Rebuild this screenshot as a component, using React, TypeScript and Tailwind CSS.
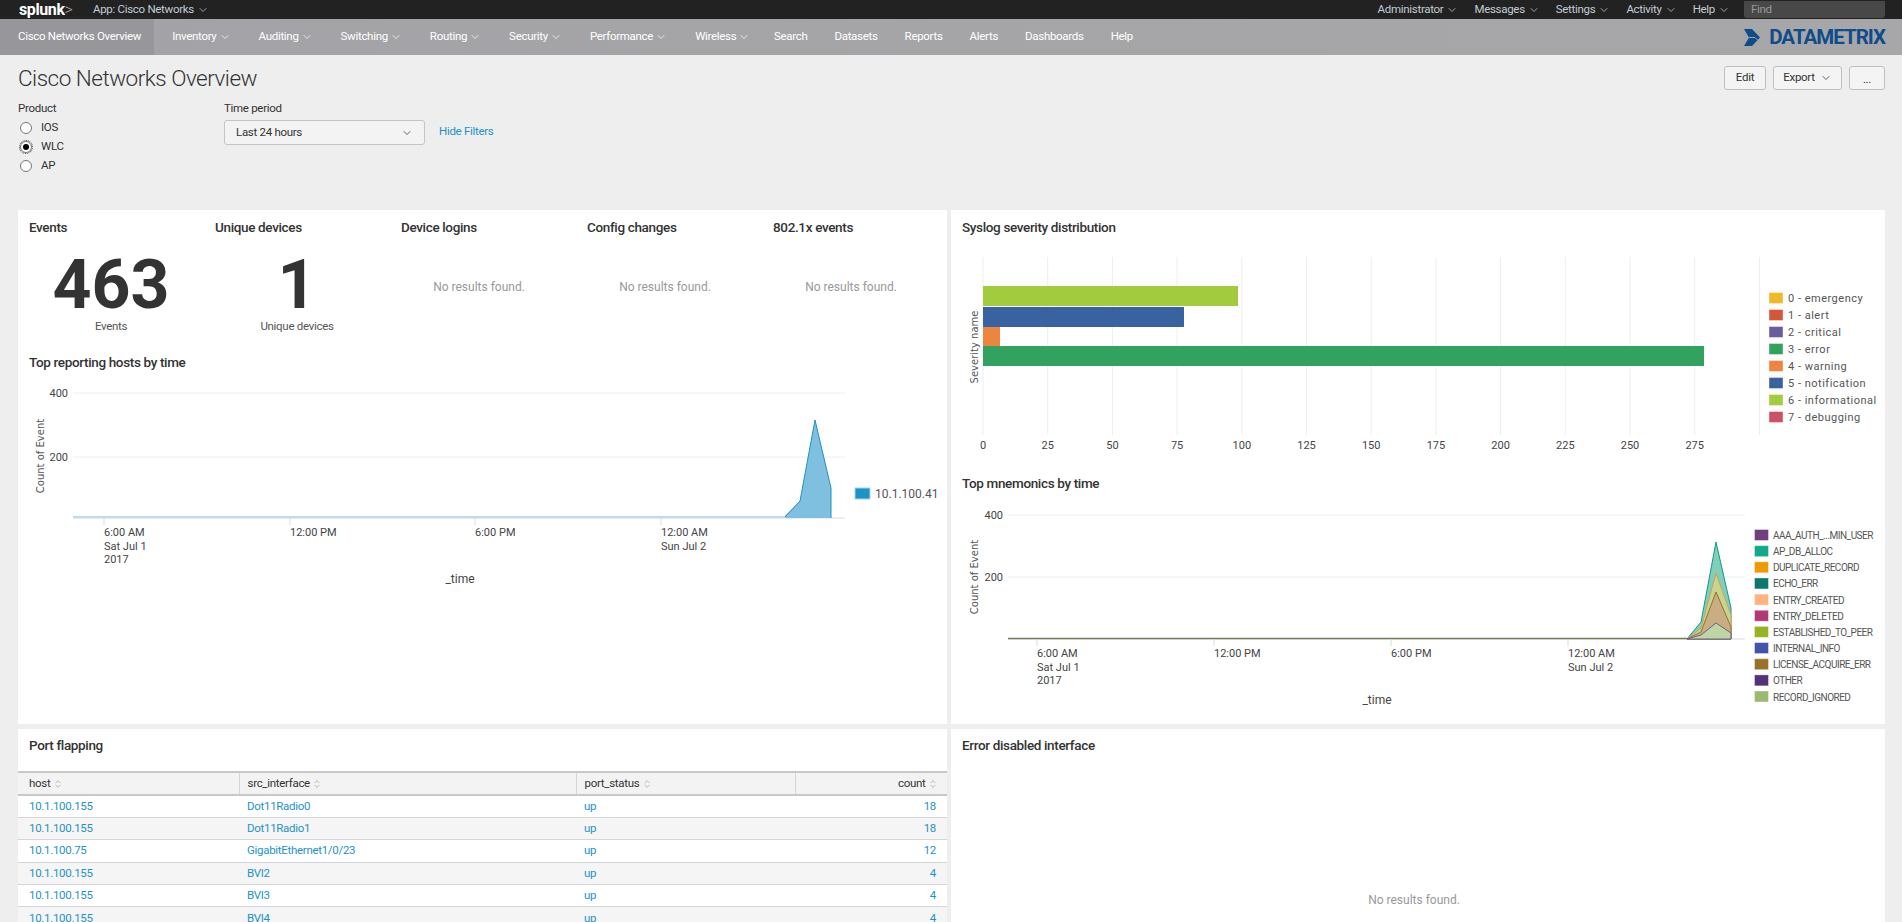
import React from 'react';
import { ChevronDown, ChevronsUpDown } from 'lucide-react';

const navItems = [
  { label: 'Inventory', menu: true },
  { label: 'Auditing', menu: true },
  { label: 'Switching', menu: true },
  { label: 'Routing', menu: true },
  { label: 'Security', menu: true },
  { label: 'Performance', menu: true },
  { label: 'Wireless', menu: true },
  { label: 'Search' },
  { label: 'Datasets' },
  { label: 'Reports' },
  { label: 'Alerts' },
  { label: 'Dashboards' },
  { label: 'Help' },
];

const severity = [
  ['0 - emergency', '#f2b827'],
  ['1 - alert', '#d6563c'],
  ['2 - critical', '#6a5c9e'],
  ['3 - error', '#31a35f'],
  ['4 - warning', '#ed8440'],
  ['5 - notification', '#3863a0'],
  ['6 - informational', '#a2cc3e'],
  ['7 - debugging', '#cc5068'],
];

const mnemonics = [
  ['AAA_AUTH_...MIN_USER', '#6f3f7f'],
  ['AP_DB_ALLOC', '#11a88b'],
  ['DUPLICATE_RECORD', '#ed9a00'],
  ['ECHO_ERR', '#0e776d'],
  ['ENTRY_CREATED', '#ffb380'],
  ['ENTRY_DELETED', '#b03a72'],
  ['ESTABLISHED_TO_PEER', '#95b322'],
  ['INTERNAL_INFO', '#4453aa'],
  ['LICENSE_ACQUIRE_ERR', '#99712b'],
  ['OTHER', '#55317c'],
  ['RECORD_IGNORED', '#9aba72'],
];

const rows = [
  ['10.1.100.155', 'Dot11Radio0', 'up', '18'],
  ['10.1.100.155', 'Dot11Radio1', 'up', '18'],
  ['10.1.100.75', 'GigabitEthernet1/0/23', 'up', '12'],
  ['10.1.100.155', 'BVI2', 'up', '4'],
  ['10.1.100.155', 'BVI3', 'up', '4'],
  ['10.1.100.155', 'BVI4', 'up', '4'],
];

const chartFont = 'Roboto, sans-serif';
const axisFont = 'DejaVu Sans, sans-serif';
const panelTitle = 'text-[13.5px] leading-[18px] font-medium tracking-[-0.35px] text-[#333]';

function TopMenu({ label }: { label: string }) {
  return (
    <span className="flex items-center gap-[3px] text-[#c3cbd4]">
      {label}
      <ChevronDown size={12} strokeWidth={1.5} />
    </span>
  );
}

function Stat({ title, value, caption }: { title: string; value?: string; caption?: string }) {
  return (
    <div className="h-[143px] px-[11px] pt-[8px]">
      <h3 className={panelTitle}>{title}</h3>
      {value ? (
        <div className="text-center">
          <div className="mt-[19px] text-[68px] leading-[60px] font-bold tracking-normal text-[#333]">{value}</div>
          <div className="mt-[3px] leading-[16px] text-[#555]">{caption}</div>
        </div>
      ) : (
        <div className="mt-[43px] pr-[8px] text-center text-[12px] leading-[16px] tracking-normal text-[#999]">No results found.</div>
      )}
    </div>
  );
}

function TimeAxis({ ticks, y, titleX }: { ticks: number[]; y: number; titleX: number }) {
  const labels = ['6:00 AM', '12:00 PM', '6:00 PM', '12:00 AM'];
  return (
    <g fontFamily={chartFont} fontSize="11" fill="#444">
      {ticks.map((x, i) => (
        <g key={x}>
          <line x1={x} x2={x} y1={y} y2={y + 7} stroke="#d9dce0" />
          <text x={x} y={y + 18}>{labels[i]}</text>
          {i === 0 && <text x={x} y={y + 32}>Sat Jul 1</text>}
          {i === 0 && <text x={x} y={y + 45}>2017</text>}
          {i === 3 && <text x={x} y={y + 32}>Sun Jul 2</text>}
        </g>
      ))}
      <text x={titleX} y={y + 65} textAnchor="middle" fontSize="12">_time</text>
    </g>
  );
}

function HostsChart() {
  return (
    <svg viewBox="18 380 929 220" className="block h-[220px] w-full tracking-normal">
      <line x1="73" x2="845" y1="393" y2="393" stroke="#eeeeee" />
      <line x1="73" x2="845" y1="457" y2="457" stroke="#eeeeee" />
      <line x1="73" x2="845" y1="518" y2="518" stroke="#d9dce0" />
      <g fontFamily={chartFont} fontSize="11" fill="#444" textAnchor="end">
        <text x="68" y="397">400</text>
        <text x="68" y="461">200</text>
      </g>
      <text transform="translate(44 456) rotate(-90)" fontFamily={axisFont} fontSize="10" fill="#555" textAnchor="middle">Count of Event</text>
      <polygon points="73,516 785,516 800,501 815,420 831,488 831,518 73,518" fill="#7fbfdf" />
      <rect x="73" y="516" width="712" height="2" fill="#bcdcec" />
      <polyline points="785,517 800,501 815,420 831,488 831,518" fill="none" stroke="#1e93c6" />
      <TimeAxis ticks={[104, 290, 475, 661]} y={518} titleX={460} />
      <rect x="855" y="488" width="15" height="11" fill="#1e93c6" stroke="#a5d3e8" />
      <text x="875" y="498" fontFamily={chartFont} fontSize="12" fill="#555">10.1.100.41</text>
    </svg>
  );
}

function SeverityChart() {
  const gridX = Array.from({ length: 13 }, (_, i) => 983 + i * 64.7);
  return (
    <svg viewBox="951 240 934 220" className="block h-[220px] w-full tracking-normal">
      {gridX.map((x) => (
        <line key={x} x1={x} x2={x} y1="257" y2="435" stroke="#eeeeee" />
      ))}
      <rect x="983" y="286" width="255" height="20" fill="#a2cc3e" />
      <rect x="983" y="307" width="201" height="20" fill="#3863a0" />
      <rect x="983" y="327" width="17" height="19" fill="#ed8440" />
      <rect x="983" y="346" width="721" height="20" fill="#31a35f" />
      <g fontFamily={chartFont} fontSize="11" fill="#444" textAnchor="middle">
        {gridX.slice(0, 12).map((x, i) => (
          <text key={x} x={x} y="449">{i * 25}</text>
        ))}
      </g>
      <text transform="translate(978 347) rotate(-90)" fontFamily={axisFont} fontSize="10" fill="#555" textAnchor="middle">Severity name</text>
      {severity.map(([name, color], i) => (
        <g key={name}>
          <rect x="1769" y={292.5 + i * 17} width="14" height="11" fill={color} stroke="#fff" strokeOpacity="0.4" />
          <text x="1788" y={302 + i * 17} fontFamily={chartFont} fontSize="11" letterSpacing="0.5" fill="#555">{name}</text>
        </g>
      ))}
    </svg>
  );
}

function MnemonicsChart() {
  return (
    <svg viewBox="951 500 934 220" className="block h-[220px] w-full tracking-normal">
      <line x1="1008" x2="1745" y1="515" y2="515" stroke="#eeeeee" />
      <line x1="1008" x2="1745" y1="577" y2="577" stroke="#eeeeee" />
      <line x1="1008" x2="1745" y1="639" y2="639" stroke="#d9dce0" />
      <g fontFamily={chartFont} fontSize="11" fill="#444" textAnchor="end">
        <text x="1003" y="519">400</text>
        <text x="1003" y="581">200</text>
      </g>
      <text transform="translate(978 577) rotate(-90)" fontFamily={axisFont} fontSize="10" fill="#555" textAnchor="middle">Count of Event</text>
      <line x1="1008" x2="1687" y1="638.5" y2="638.5" stroke="#7a7a55" strokeWidth="1.5" />
      <polygon points="1687,639 1701,622 1716,542 1731,608 1731,639" fill="#7fcfb9" stroke="#11988b" />
      <polygon points="1687,639 1701,628 1716,573 1731,615 1731,639" fill="#c8d48c" stroke="#c9a060" />
      <polygon points="1687,639 1701,632 1716,592 1731,627 1731,639" fill="#c9ae84" stroke="#99712b" />
      <polygon points="1687,639 1701,635 1716,623 1731,633 1731,639" fill="#bdd6a3" stroke="#6f5f90" />
      <TimeAxis ticks={[1037, 1214, 1391, 1568]} y={639} titleX={1377} />
      {mnemonics.map(([name, color], i) => (
        <g key={name}>
          <rect x="1754.5" y={529.5 + i * 16.15} width="14" height="11" fill={color} stroke="#fff" strokeOpacity="0.4" />
          <text x="1773" y={539 + i * 16.15} fontFamily={chartFont} fontSize="10" letterSpacing="-0.5" fill="#555">{name}</text>
        </g>
      ))}
    </svg>
  );
}

function Radio({ label, checked }: { label: string; checked?: boolean }) {
  return (
    <label className="flex h-[19px] items-center gap-[9px] pl-[2px] text-[#333]">
      <span className={`flex h-[12px] w-[12px] items-center justify-center rounded-full border border-[#777] bg-white ${checked ? 'outline-1 outline-dotted outline-[#444]' : ''}`}>
        {checked && <span className="h-[6px] w-[6px] rounded-full bg-black" />}
      </span>
      {label}
    </label>
  );
}

function Button({ children, className }: { children: React.ReactNode; className: string }) {
  return (
    <button className={`flex h-[24px] items-center justify-center rounded-[3px] border border-[#bfbfbf] bg-[#f4f4f4] text-[#333] ${className}`}>
      {children}
    </button>
  );
}

function SortIcon() {
  return <ChevronsUpDown size={10} className="inline text-[#aaa]" />;
}

export default function App() {
  return (
    <div className="h-[922px] overflow-hidden bg-[#eeeeee] font-['Roboto',sans-serif] text-[11.5px] tracking-[-0.3px]">
      <div className="flex h-[19px] items-center bg-[#222222] pr-[17px] pl-[19px]">
        <span className="w-[74px] text-[16px] leading-[19px] font-bold tracking-[-0.4px] text-white">
          splunk<span className="font-light text-[#aaa]">&gt;</span>
        </span>
        <TopMenu label="App: Cisco Networks" />
        <div className="ml-auto flex items-center gap-[16px]">
          <TopMenu label="Administrator" />
          <TopMenu label="Messages" />
          <TopMenu label="Settings" />
          <TopMenu label="Activity" />
          <TopMenu label="Help" />
          <div className="-ml-[2px] h-[17px] w-[141px] self-start rounded-b-[3px] bg-[#484848] pl-[7px] leading-[17px] text-[#999]">Find</div>
        </div>
      </div>

      <nav className="flex h-[36px] items-center bg-gradient-to-r from-[#a3a3a7] to-[#a7a7a9] pr-[17px] text-white">
        <a className="flex h-full items-center bg-[#97979b] pr-[13px] pl-[18px]">Cisco Networks Overview</a>
        <div className="flex h-full">
          {navItems.map((item) => (
            <a key={item.label} className={`flex h-full items-center gap-[2px] ${item.menu ? 'pr-[10px] pl-[18px]' : 'px-[13.5px]'}`}>
              {item.label}
              {item.menu && <ChevronDown size={12} strokeWidth={1.5} />}
            </a>
          ))}
        </div>
        <div className="ml-auto flex h-[17px] items-center gap-[9px]">
          <svg viewBox="0 0 16 17" className="h-[17px] w-[16px]">
            <path d="M0 0h8l8 8.5L8 17H0l5-8.5z" fill="#0f4c8a" />
            <path d="M5 8.5h6l2.5 2.5" fill="none" stroke="#a3a3a7" strokeWidth="1" />
          </svg>
          <span className="text-[20.5px] leading-[17px] font-bold tracking-[-1px] text-[#0f4c8a]">DATAMETRIX</span>
        </div>
      </nav>

      <div className="flex items-center justify-between pt-[9px] pr-[17px] pl-[18px]">
        <h1 className="text-[22.5px] leading-[28px] font-light tracking-[-0.5px] text-[#333]">Cisco Networks Overview</h1>
        <div className="flex gap-[7px]">
          <Button className="w-[42px]">Edit</Button>
          <Button className="w-[69px] gap-[5px]">Export <ChevronDown size={12} strokeWidth={1.5} /></Button>
          <Button className="w-[36px] pt-[3px]">...</Button>
        </div>
      </div>

      <div className="flex pt-[8px] pl-[18px]">
        <div className="w-[206px]">
          <div className="leading-[16px] text-[#333]">Product</div>
          <div className="mt-[2px]">
            <Radio label="IOS" />
            <Radio label="WLC" checked />
            <Radio label="AP" />
          </div>
        </div>
        <div className="w-[201px]">
          <div className="leading-[16px] text-[#333]">Time period</div>
          <div className="mt-[4px] flex h-[25px] items-center justify-between rounded-[3px] border border-[#c4c4c4] bg-[#f3f3f3] px-[11px] text-[#333]">
            Last 24 hours
            <ChevronDown size={12} strokeWidth={1.5} />
          </div>
        </div>
        <a className="mt-[23px] ml-[14px] leading-[16px] text-[#1e93c6]">Hide Filters</a>
      </div>

      <div className="mt-[35px] grid grid-cols-[929px_934px] gap-x-[4px] gap-y-[5px] pl-[18px]">
        <section className="h-[514px] bg-white">
          <div className="grid grid-cols-[repeat(5,186px)]">
            <Stat title="Events" value="463" caption="Events" />
            <Stat title="Unique devices" value="1" caption="Unique devices" />
            <Stat title="Device logins" />
            <Stat title="Config changes" />
            <Stat title="802.1x events" />
          </div>
          <h3 className={`pl-[11px] ${panelTitle}`}>Top reporting hosts by time</h3>
          <div className="mt-[9px]"><HostsChart /></div>
        </section>
        <section className="h-[514px] bg-white">
          <h3 className={`pt-[8px] pl-[11px] ${panelTitle}`}>Syslog severity distribution</h3>
          <div className="mt-[4px]"><SeverityChart /></div>
          <h3 className={`mt-[14px] pl-[11px] ${panelTitle}`}>Top mnemonics by time</h3>
          <div className="mt-[8px]"><MnemonicsChart /></div>
        </section>
        <section className="h-[193px] bg-white">
          <h3 className={`pt-[7px] pl-[11px] ${panelTitle}`}>Port flapping</h3>
          <table className="mt-[17px] w-full table-fixed">
            <thead>
              <tr className="h-[23px] border-y-2 border-[#c8c8c8] bg-[#f3f3f3] text-left text-[#333]">
                <th className="w-[221px] pl-[11px] font-normal">host <SortIcon /></th>
                <th className="w-[337px] border-l border-[#d5d5d5] pl-[8px] font-normal">src_interface <SortIcon /></th>
                <th className="w-[219px] border-l border-[#d5d5d5] pl-[8px] font-normal">port_status <SortIcon /></th>
                <th className="border-l border-[#d5d5d5] pr-[9px] text-right font-normal">count <SortIcon /></th>
              </tr>
            </thead>
            <tbody className="text-[#1e93c6]">
              {rows.map((r, i) => (
                <tr key={i} className={`h-[22.4px] border-b border-[#d5d5d5] ${i % 2 ? 'bg-[#f5f5f5]' : 'bg-white'}`}>
                  <td className="pl-[11px]">{r[0]}</td>
                  <td className="pl-[8px]">{r[1]}</td>
                  <td className="pl-[8px]">{r[2]}</td>
                  <td className="pr-[11px] text-right">{r[3]}</td>
                </tr>
              ))}
            </tbody>
          </table>
        </section>
        <section className="h-[193px] bg-white">
          <h3 className={`pt-[7px] pl-[11px] ${panelTitle}`}>Error disabled interface</h3>
          <div className="mt-[138px] pr-[8px] text-center text-[12px] leading-[16px] tracking-normal text-[#999]">No results found.</div>
        </section>
      </div>
    </div>
  );
}
